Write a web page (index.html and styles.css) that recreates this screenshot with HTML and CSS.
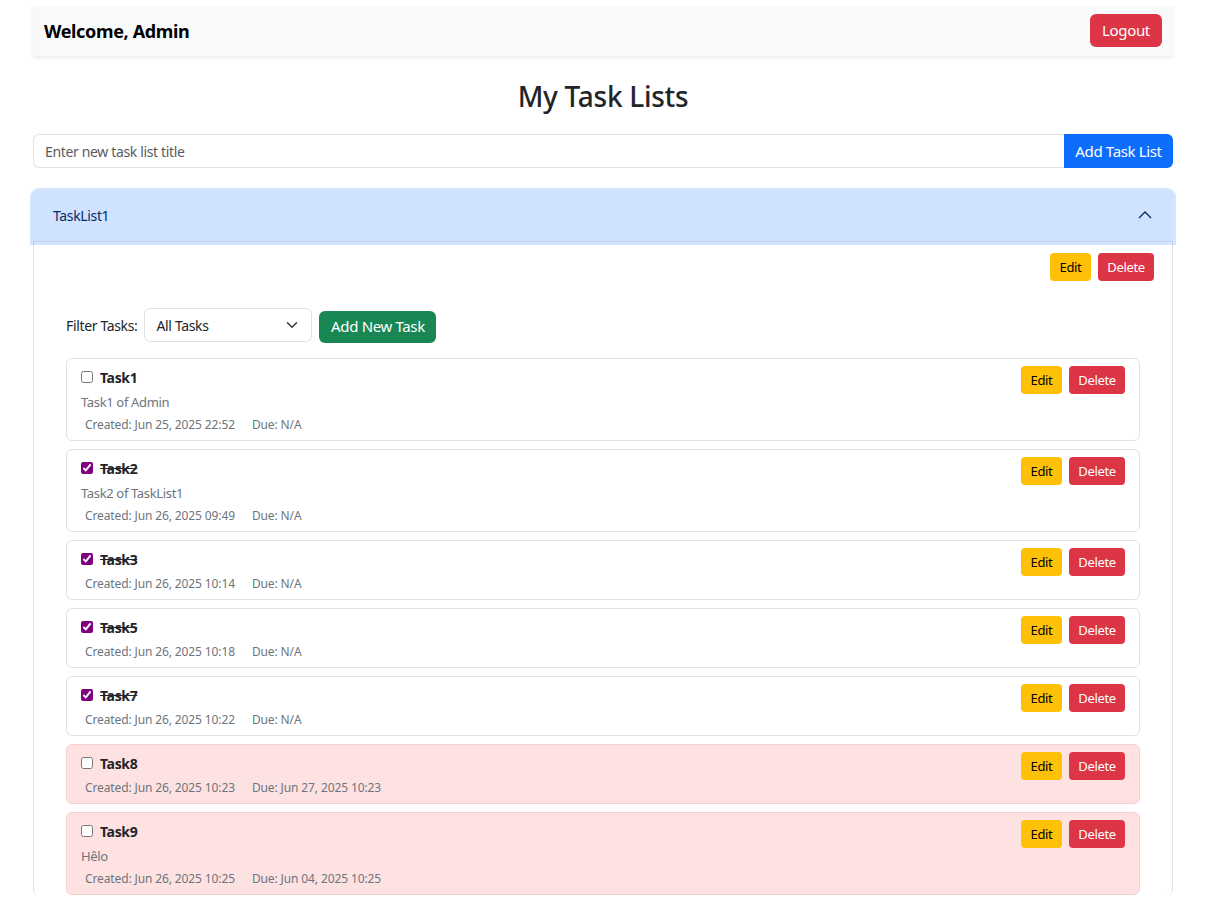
FILE: index.html
```html
<!DOCTYPE html>
<html lang="en">
<head>
<meta charset="utf-8">
<title>My Task Lists</title>
<link rel="stylesheet" href="styles.css">
</head>
<body>
<div class="wrap">
  <nav class="navbar">
    <span class="welcome">Welcome, Admin</span>
    <button class="btn btn-danger btn-logout">Logout</button>
  </nav>

  <h2 class="page-title">My Task Lists</h2>

  <div class="input-group">
    <input class="form-control" type="text" placeholder="Enter new task list title">
    <button class="btn btn-primary btn-add-list">Add Task List</button>
  </div>

  <div class="accordion">
    <div class="acc-header">
      <span>TaskList1</span>
      <svg class="chev" width="16" height="16" viewBox="0 0 16 16"><path d="M2 11 L8 5 L14 11" fill="none" stroke="#052c65" stroke-width="1.4"/></svg>
    </div>
    <div class="acc-body">
      <div class="list-actions">
        <button class="btn btn-sm btn-warning">Edit</button>
        <button class="btn btn-sm btn-danger">Delete</button>
      </div>
      <div class="tasks">
        <div class="filter-row">
          <label class="filter-label">Filter Tasks:</label>
          <div class="select">
            <span>All Tasks</span>
            <svg width="12" height="12" viewBox="0 0 16 16"><path d="M2 5 L8 11 L14 5" fill="none" stroke="#343a40" stroke-width="2" stroke-linecap="round" stroke-linejoin="round"/></svg>
          </div>
          <button class="btn btn-success btn-add-task">Add New Task</button>
        </div>

        <div class="task-list">
          <div class="task">
            <div class="task-main">
              <div class="task-title"><input type="checkbox"><span>Task1</span></div>
              <div class="desc">Task1 of Admin</div>
              <div class="meta"><span>Created: Jun 25, 2025 22:52</span><span>Due: N/A</span></div>
            </div>
            <div class="task-actions"><button class="btn btn-sm btn-warning">Edit</button><button class="btn btn-sm btn-danger">Delete</button></div>
          </div>

          <div class="task done">
            <div class="task-main">
              <div class="task-title"><input type="checkbox" checked><span>Task2</span></div>
              <div class="desc">Task2 of TaskList1</div>
              <div class="meta"><span>Created: Jun 26, 2025 09:49</span><span>Due: N/A</span></div>
            </div>
            <div class="task-actions"><button class="btn btn-sm btn-warning">Edit</button><button class="btn btn-sm btn-danger">Delete</button></div>
          </div>

          <div class="task done">
            <div class="task-main">
              <div class="task-title"><input type="checkbox" checked><span>Task3</span></div>
              <div class="meta"><span>Created: Jun 26, 2025 10:14</span><span>Due: N/A</span></div>
            </div>
            <div class="task-actions"><button class="btn btn-sm btn-warning">Edit</button><button class="btn btn-sm btn-danger">Delete</button></div>
          </div>

          <div class="task done">
            <div class="task-main">
              <div class="task-title"><input type="checkbox" checked><span>Task5</span></div>
              <div class="meta"><span>Created: Jun 26, 2025 10:18</span><span>Due: N/A</span></div>
            </div>
            <div class="task-actions"><button class="btn btn-sm btn-warning">Edit</button><button class="btn btn-sm btn-danger">Delete</button></div>
          </div>

          <div class="task done">
            <div class="task-main">
              <div class="task-title"><input type="checkbox" checked><span>Task7</span></div>
              <div class="meta"><span>Created: Jun 26, 2025 10:22</span><span>Due: N/A</span></div>
            </div>
            <div class="task-actions"><button class="btn btn-sm btn-warning">Edit</button><button class="btn btn-sm btn-danger">Delete</button></div>
          </div>

          <div class="task overdue">
            <div class="task-main">
              <div class="task-title"><input type="checkbox"><span>Task8</span></div>
              <div class="meta"><span>Created: Jun 26, 2025 10:23</span><span>Due: Jun 27, 2025 10:23</span></div>
            </div>
            <div class="task-actions"><button class="btn btn-sm btn-warning">Edit</button><button class="btn btn-sm btn-danger">Delete</button></div>
          </div>

          <div class="task overdue">
            <div class="task-main">
              <div class="task-title"><input type="checkbox"><span>Task9</span></div>
              <div class="desc">Hêlo</div>
              <div class="meta"><span>Created: Jun 26, 2025 10:25</span><span>Due: Jun 04, 2025 10:25</span></div>
            </div>
            <div class="task-actions"><button class="btn btn-sm btn-warning">Edit</button><button class="btn btn-sm btn-danger">Delete</button></div>
          </div>
        </div>
      </div>
    </div>
  </div>
</div>
</body>
</html>
```

FILE: styles.css
```css
* { box-sizing: border-box; }

body {
  margin: 0;
  font-family: "Noto Sans", "Open Sans", sans-serif;
  color: #212529;
  background: #fff;
  font-size: 14px;
  letter-spacing: -0.025em;
}

.wrap {
  width: 1140px;
  margin: 0 0 0 33px;
  padding-top: 6px;
}

.navbar {
  height: 50px;
  display: flex;
  align-items: center;
  justify-content: space-between;
  padding: 0 11px;
  background: #f8f9fa;
  box-shadow: 0 2px 4px rgba(0, 0, 0, 0.08);
}

.welcome {
  font-size: 18px;
  font-weight: 700;
  color: #000;
}

.btn {
  font-family: inherit;
  letter-spacing: inherit;
  border: none;
  cursor: pointer;
  border-radius: 6px;
  color: #fff;
  padding: 0;
  line-height: 1;
}

.btn-danger { background: #dc3545; color: #fff; }
.btn-primary { background: #0d6efd; color: #fff; }
.btn-success { background: #198754; color: #fff; }
.btn-warning { background: #ffc107; color: #000; }

.btn-logout {
  width: 72px;
  height: 33px;
  font-size: 15px;
  margin-top: -1px;
}

.page-title {
  margin: 23px 0 21px;
  text-align: center;
  font-size: 28px;
  font-weight: 500;
  line-height: 34px;
  letter-spacing: -0.01em;
  color: #212529;
}

.input-group {
  display: flex;
  height: 34px;
}

.form-control {
  flex: 1;
  min-width: 0;
  font-family: inherit;
  letter-spacing: inherit;
  font-size: 14px;
  color: #212529;
  padding: 0 11px;
  border: 1px solid #dee2e6;
  border-right: none;
  border-radius: 6px 0 0 6px;
  outline: none;
}

.form-control::placeholder { color: #595c5f; }

.btn-add-list {
  width: 109px;
  font-size: 15px;
  border-radius: 0 6px 6px 0;
}

.accordion {
  margin-top: 23px;
  border: 1px solid #dee2e6;
  border-radius: 6px;
  border-bottom: none;
}

.acc-header {
  height: 51px;
  margin: -1px -1px 0;
  display: flex;
  align-items: center;
  justify-content: space-between;
  padding: 0 20px 3px 20px;
  background: #cfe2ff;
  color: #052c65;
  font-size: 14px;
  border-radius: 6px 6px 0 0;
  box-shadow: 0 0 0 3px rgba(13, 110, 253, 0.18), inset 0 -1px 0 rgba(0, 0, 0, 0.08);
  position: relative;
}

.acc-body {
  padding: 11px 18px 0;
}

.list-actions {
  display: flex;
  justify-content: flex-end;
  gap: 7px;
}

.btn-sm {
  height: 28px;
  font-size: 13px;
  border-radius: 4px;
}

.btn-warning.btn-sm { width: 41px; }
.btn-danger.btn-sm { width: 56px; }

.tasks {
  padding: 0 14px;
}

.filter-row {
  margin-top: 27px;
  display: flex;
  align-items: center;
  height: 35px;
}

.filter-label {
  font-size: 14px;
  margin-right: 7px;
}

.select {
  width: 168px;
  height: 34px;
  border: 1px solid #dee2e6;
  border-radius: 6px;
  display: flex;
  align-items: center;
  justify-content: space-between;
  padding: 0 13px 0 11px;
  font-size: 14px;
  margin-right: 7px;
  margin-top: -1px;
}

.btn-add-task {
  width: 117px;
  height: 32px;
  font-size: 15px;
  margin-top: 2px;
}

.task-list {
  margin-top: 15px;
  display: flex;
  flex-direction: column;
  gap: 8px;
}

.task {
  display: flex;
  justify-content: space-between;
  align-items: flex-start;
  border: 1px solid #dee2e6;
  border-radius: 6px;
  padding: 8px 14px 6px;
  background: #fff;
}

.task.overdue {
  background: #fee2e2;
  border-color: #f5d0d3;
}

.task-title {
  display: flex;
  align-items: center;
  height: 20px;
  font-weight: 700;
  font-size: 14px;
}

.task-title input {
  margin: 0 7px 0 0;
  width: 12px;
  height: 12px;
  accent-color: #800080;
}

.task.done .task-title span {
  text-decoration: line-through;
}

.desc {
  margin-top: 5px;
  line-height: 20px;
  font-size: 13px;
  color: #6c757d;
}

.meta {
  margin-top: 4px;
  padding-top: 1px;
  line-height: 19px;
  font-size: 12px;
  letter-spacing: -0.01em;
  color: #6c757d;
  padding-left: 4px;
  display: flex;
  gap: 17px;
}

.desc + .meta { margin-top: 2px; }

.task-actions {
  display: flex;
  gap: 7px;
  margin-top: -1px;
}
```
